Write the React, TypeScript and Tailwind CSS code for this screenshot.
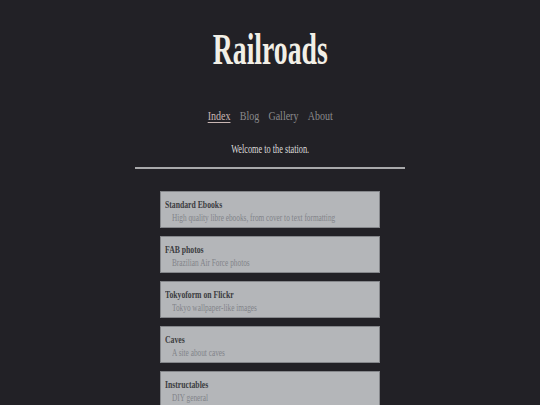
import React from "react";

const links = [
  { title: "Standard Ebooks", desc: "High quality libre ebooks, from cover to text formatting" },
  { title: "FAB photos", desc: "Brazilian Air Force photos" },
  { title: "Tokyoform on Flickr", desc: "Tokyo wallpaper-like images" },
  { title: "Caves", desc: "A site about caves" },
  { title: "Instructables", desc: "DIY general" },
];

export default function App() {
  return (
    <div className="min-h-screen bg-[#222126] font-['Liberation_Serif',serif] text-center">
      <header className="flex justify-center pt-[28px]">
        <h1 className="block scale-x-[0.63] text-[44px] font-bold leading-[44px] text-[#f2efe6]">Railroads</h1>
      </header>
      <nav className="mt-[36px] flex justify-center">
        <div className="flex scale-x-[0.77] gap-[12px] text-[13px] leading-[16px]">
          <a className="text-[#c9b6b3] underline decoration-1 underline-offset-[2px]">Index</a>
          <a className="text-[#8b8b8d]">Blog</a>
          <a className="text-[#8b8b8d]">Gallery</a>
          <a className="text-[#8b8b8d]">About</a>
        </div>
      </nav>
      <div className="mt-[18px] flex justify-center">
        <p className="block scale-x-[0.72] text-[11.5px] leading-[14px] text-[#dcdcdc]">Welcome to the station.</p>
      </div>
      <hr className="mx-auto mt-[10.5px] h-[2px] w-[270px] border-0 bg-[#a9a9ab]" />
      <ul className="mx-auto mt-[22.5px] flex w-[220px] flex-col gap-[8px] text-left">
        {links.map((l) => (
          <li key={l.title} className="border border-[#85878b] bg-[#b4b6b9] pl-[4px] pt-[6px] pb-[3px]">
            <span className="block origin-left scale-x-[0.7] whitespace-nowrap text-[11px] font-bold leading-[13px] text-[#3b3c40]">
              {l.title}
            </span>
            <span className="mt-[1px] ml-[7px] block origin-left scale-x-[0.73] whitespace-nowrap text-[10px] leading-[12px] text-[#828489]">
              {l.desc}
            </span>
          </li>
        ))}
      </ul>
    </div>
  );
}
